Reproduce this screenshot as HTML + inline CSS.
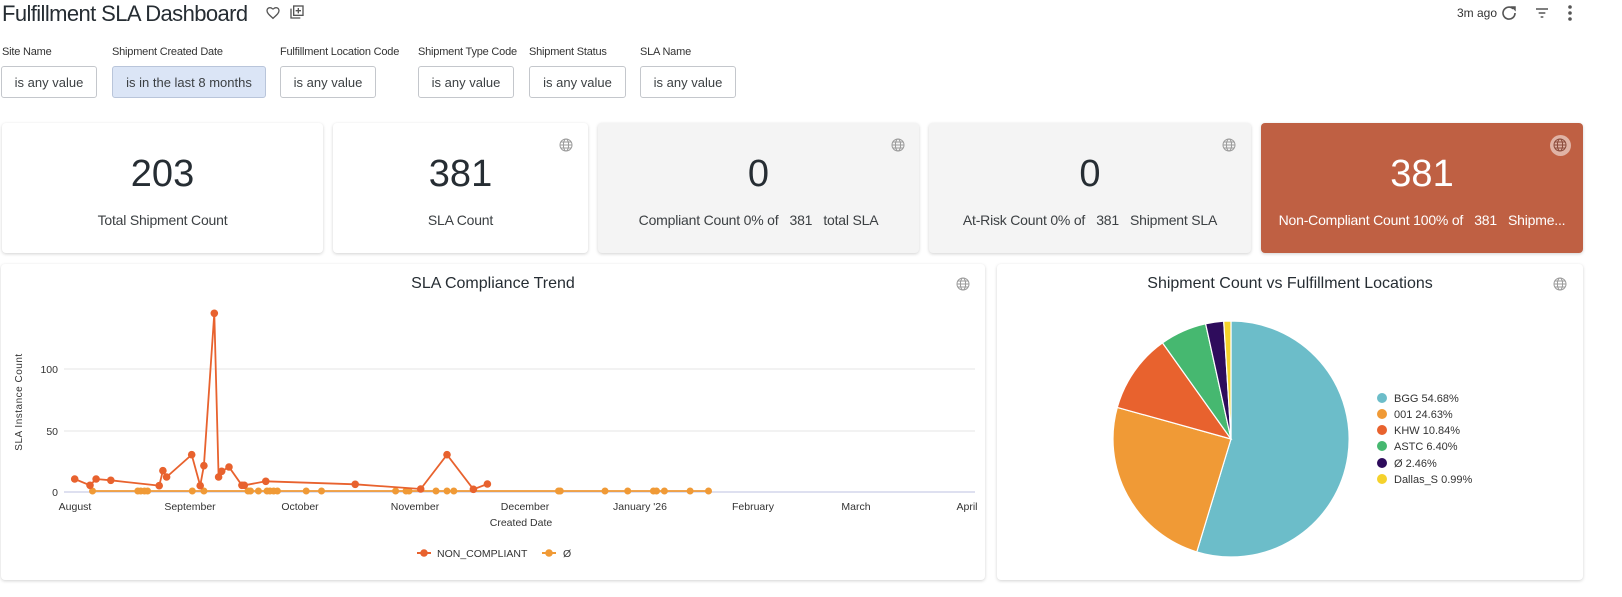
<!DOCTYPE html>
<html><head><meta charset="utf-8"><style>
*{box-sizing:border-box;margin:0;padding:0}
body{width:1622px;height:597px;background:#fff;font-family:"Liberation Sans",Arial,sans-serif;color:#262d33;position:relative;overflow:hidden}
.abs{position:absolute}
.title{left:2px;top:1px;font-size:22px;color:#262d33;letter-spacing:-0.6px}
.lbl{font-size:11px;color:#333;top:46px;letter-spacing:-0.2px}
.box{top:66px;height:32px;border:1px solid #c4c7cc;border-radius:3px;font-size:13px;color:#3c4043;display:flex;align-items:center;justify-content:center;background:#fff}
.card{top:123px;height:130px;border-radius:4px;box-shadow:0 1px 3px rgba(0,0,0,.18);text-align:center}
.card .n{position:absolute;left:0;right:0;top:30px;font-size:38px;color:#262d33}
.card .t{position:absolute;left:0;right:0;top:89px;font-size:14px;color:#3c4043;white-space:nowrap;letter-spacing:-0.2px}
.panel{top:264px;height:316px;border-radius:4px;box-shadow:0 1px 3px rgba(0,0,0,.18);background:#fff}
</style></head><body>
<div class="abs title">Fulfillment SLA Dashboard</div>
<svg class="abs" style="left:265px;top:5px" width="16" height="16" viewBox="0 0 24 24"><path d="M12 20l-1.3-1.2C6 14.5 3 11.8 3 8.5 3 5.9 5 4 7.5 4c1.5 0 2.9.7 3.8 1.8h1.4C13.6 4.7 15 4 16.5 4 19 4 21 5.9 21 8.5c0 3.3-3 6-7.7 10.3z" fill="none" stroke="#555" stroke-width="2"/></svg>
<svg class="abs" style="left:289px;top:4px" width="16" height="16" viewBox="0 0 24 24"><rect x="7" y="3" width="14" height="14" fill="none" stroke="#555" stroke-width="2"/><path d="M3 7v14h14" fill="none" stroke="#555" stroke-width="2"/><path d="M14 6v8M10 10h8" stroke="#555" stroke-width="2"/></svg>
<div class="abs" style="left:1457px;top:6px;font-size:12px;color:#333">3m ago</div>
<svg class="abs" style="left:1500px;top:4px" width="18" height="18" viewBox="0 0 24 24"><path d="M17.6 6.4A8 8 0 1 0 20 12" fill="none" stroke="#555" stroke-width="2.2"/><path d="M14 3h7v7z" fill="#555"/></svg>
<svg class="abs" style="left:1534px;top:5px" width="16" height="16" viewBox="0 0 24 24"><path d="M3 6h18M7 12h10M10 18h4" stroke="#555" stroke-width="2.2"/></svg>
<svg class="abs" style="left:1566px;top:4px" width="8" height="18" viewBox="0 0 8 18"><circle cx="4" cy="3" r="1.8" fill="#555"/><circle cx="4" cy="9" r="1.8" fill="#555"/><circle cx="4" cy="15" r="1.8" fill="#555"/></svg>

<div class="abs lbl" style="left:2px">Site Name</div>
<div class="abs lbl" style="left:112px">Shipment Created Date</div>
<div class="abs lbl" style="left:280px">Fulfillment Location Code</div>
<div class="abs lbl" style="left:418px">Shipment Type Code</div>
<div class="abs lbl" style="left:529px">Shipment Status</div>
<div class="abs lbl" style="left:640px">SLA Name</div>
<div class="abs box" style="left:1px;width:96px">is any value</div>
<div class="abs box" style="left:112px;width:154px;background:#dbe5f6;border-color:#b9c5da">is in the last 8 months</div>
<div class="abs box" style="left:280px;width:96px">is any value</div>
<div class="abs box" style="left:418px;width:96px">is any value</div>
<div class="abs box" style="left:529px;width:97px">is any value</div>
<div class="abs box" style="left:640px;width:96px">is any value</div>

<div class="abs card" style="left:2px;width:321px;background:#fff"><div class="n">203</div><div class="t">Total Shipment Count</div></div>
<div class="abs card" style="left:333px;width:255px;background:#fff"><div class="n">381</div><div class="t">SLA Count</div></div>
<div class="abs card" style="left:598px;width:321px;background:#f4f4f4"><div class="n">0</div><div class="t">Compliant Count 0% of &nbsp; 381 &nbsp; total SLA</div></div>
<div class="abs card" style="left:929px;width:322px;background:#f4f4f4"><div class="n">0</div><div class="t">At-Risk Count 0% of &nbsp; 381 &nbsp; Shipment SLA</div></div>
<div class="abs card" style="left:1261px;width:322px;background:#bf6043"><div class="n" style="color:#fff">381</div><div class="t" style="color:#fff">Non-Compliant Count 100% of &nbsp; 381 &nbsp; Shipme...</div></div>
<div class="abs" style="left:1550px;top:135px;width:21px;height:21px;border-radius:50%;background:#e0b3a5"></div>

<svg class="abs" style="left:0;top:0" width="1622" height="597" pointer-events="none">
<defs><g id="gl"><circle cx="0" cy="0" r="6" fill="none" stroke="#9a9a9a" stroke-width="1"/><ellipse cx="0" cy="0" rx="2.6" ry="6" fill="none" stroke="#9a9a9a" stroke-width="1"/><path d="M-6 0h12M-5 -3h10M-5 3h10" stroke="#9a9a9a" stroke-width="0.9"/></g></defs>
<use href="#gl" x="566" y="145"/><use href="#gl" x="898" y="145"/><use href="#gl" x="1229" y="145"/>
<g transform="translate(1560,145)"><circle r="6" fill="none" stroke="#8a4a3a"/><ellipse rx="2.6" ry="6" fill="none" stroke="#8a4a3a"/><path d="M-6 0h12M-5 -3h10M-5 3h10" stroke="#8a4a3a" stroke-width="0.9"/></g>
</svg>

<div class="abs panel" style="left:1px;width:984px"></div>
<div class="abs panel" style="left:997px;width:586px"></div>
<div class="abs" style="left:1px;width:984px;top:275px;text-align:center;font-size:16px;color:#262d33">SLA Compliance Trend</div>
<div class="abs" style="left:997px;width:586px;top:275px;text-align:center;font-size:16px;color:#262d33">Shipment Count vs Fulfillment Locations</div>

<svg class="abs" style="left:0;top:0" width="1622" height="597">
<use href="#gl" x="963" y="284"/><use href="#gl" x="1560" y="284"/>
<g stroke="#e6e6e6" stroke-width="1"><path d="M64 369H975M64 431H975"/></g>
<path d="M64 492H975" stroke="#c9cde6" stroke-width="1.2"/>
<g font-size="10.5" fill="#333" text-anchor="end"><text x="58" y="373">100</text><text x="58" y="435">50</text><text x="58" y="496">0</text></g>
<text transform="translate(22,402) rotate(-90)" font-size="10" fill="#333" text-anchor="middle" letter-spacing="0.5">SLA Instance Count</text>
<g font-size="10.5" fill="#333" text-anchor="middle">
<text x="75" y="510">August</text><text x="190" y="510">September</text><text x="300" y="510">October</text><text x="415" y="510">November</text><text x="525" y="510">December</text><text x="640" y="510">January '26</text><text x="753" y="510">February</text><text x="856" y="510">March</text><text x="967" y="510">April</text>
<text x="521" y="526">Created Date</text></g>
<path d="M92.5 491H708.5" stroke="#f09a36" stroke-width="1.8"/>
<g fill="#f09a36">
<circle cx="92.5" cy="491" r="3.5"/><circle cx="137.8" cy="491" r="3.5"/><circle cx="140.8" cy="491" r="3.5"/><circle cx="144.5" cy="491" r="3.5"/><circle cx="147.6" cy="491" r="3.5"/><circle cx="192.3" cy="491" r="3.5"/><circle cx="203.9" cy="491" r="3.5"/><circle cx="248" cy="491" r="3.5"/><circle cx="250.5" cy="491" r="3.5"/><circle cx="258.4" cy="491" r="3.5"/><circle cx="267" cy="491" r="3.5"/><circle cx="270" cy="491" r="3.5"/><circle cx="273.7" cy="491" r="3.5"/><circle cx="277.4" cy="491" r="3.5"/><circle cx="306.2" cy="491" r="3.5"/><circle cx="321.5" cy="491" r="3.5"/><circle cx="395.6" cy="491" r="3.5"/><circle cx="406" cy="491" r="3.5"/><circle cx="409" cy="491" r="3.5"/><circle cx="436" cy="491" r="3.5"/><circle cx="447" cy="491" r="3.5"/><circle cx="453.8" cy="491" r="3.5"/><circle cx="558.5" cy="491" r="3.5"/><circle cx="560.3" cy="491" r="3.5"/><circle cx="605" cy="491" r="3.5"/><circle cx="627.7" cy="491" r="3.5"/><circle cx="653.4" cy="491" r="3.5"/><circle cx="656.5" cy="491" r="3.5"/><circle cx="664.4" cy="491" r="3.5"/><circle cx="690.1" cy="491" r="3.5"/><circle cx="708.5" cy="491" r="3.5"/></g>
<polyline fill="none" stroke="#e8622e" stroke-width="1.8" points="74.7,479 90,485.3 96.1,479 110.8,480.3 159.2,485.7 162.9,470.7 166.6,477 191.7,454.7 200.2,485.7 203.9,465.7 214.3,313.3 218.6,477 221.7,471.3 229,467 241.9,485.3 244.3,485.3 265.8,481.3 355.2,484.3 420.7,489 447,454.7 473.4,489.3 487.4,484"/>
<g fill="#e8622e">
<circle cx="74.7" cy="479" r="3.8"/><circle cx="90" cy="485.3" r="3.8"/><circle cx="96.1" cy="479" r="3.8"/><circle cx="110.8" cy="480.3" r="3.8"/><circle cx="159.2" cy="485.7" r="3.8"/><circle cx="162.9" cy="470.7" r="3.8"/><circle cx="166.6" cy="477" r="3.8"/><circle cx="191.7" cy="454.7" r="3.8"/><circle cx="200.2" cy="485.7" r="3.8"/><circle cx="203.9" cy="465.7" r="3.8"/><circle cx="214.3" cy="313.3" r="3.8"/><circle cx="218.6" cy="477" r="3.8"/><circle cx="221.7" cy="471.3" r="3.8"/><circle cx="229" cy="467" r="3.8"/><circle cx="241.9" cy="485.3" r="3.8"/><circle cx="244.3" cy="485.3" r="3.8"/><circle cx="265.8" cy="481.3" r="3.8"/><circle cx="355.2" cy="484.3" r="3.8"/><circle cx="420.7" cy="489" r="3.8"/><circle cx="447" cy="454.7" r="3.8"/><circle cx="473.4" cy="489.3" r="3.8"/><circle cx="487.4" cy="484" r="3.8"/></g>
<path d="M417 553h14" stroke="#e8622e" stroke-width="2"/><circle cx="424" cy="553" r="3.8" fill="#e8622e"/>
<text x="437" y="557" font-size="10.5" fill="#333">NON_COMPLIANT</text>
<path d="M542 553h14" stroke="#f09a36" stroke-width="2"/><circle cx="549" cy="553" r="3.8" fill="#f09a36"/>
<text x="563" y="557" font-size="10.5" fill="#333">Ø</text>

<g transform="translate(1231,439)" stroke="#fff" stroke-width="1.2">
<path d="M0 0L0 -118A118 118 0 1 1 -34.2 112.9Z" fill="#6cbdc9"/>
<path d="M0 0L-34.2 112.9A118 118 0 0 1 -113.7 -31.6Z" fill="#f09a36"/>
<path d="M0 0L-113.7 -31.6A118 118 0 0 1 -68.5 -96.1Z" fill="#e8622e"/>
<path d="M0 0L-68.5 -96.1A118 118 0 0 1 -25.4 -115.2Z" fill="#46b870"/>
<path d="M0 0L-25.4 -115.2A118 118 0 0 1 -7.3 -117.8Z" fill="#2e0c5c"/>
<path d="M0 0L-7.3 -117.8A118 118 0 0 1 0 -118Z" fill="#f5d22c"/>
</g>
<g font-size="11" fill="#333">
<circle cx="1382" cy="398" r="5" fill="#6cbdc9"/><text x="1394" y="402">BGG 54.68%</text>
<circle cx="1382" cy="414" r="5" fill="#f09a36"/><text x="1394" y="418">001 24.63%</text>
<circle cx="1382" cy="430" r="5" fill="#e8622e"/><text x="1394" y="434">KHW 10.84%</text>
<circle cx="1382" cy="446" r="5" fill="#46b870"/><text x="1394" y="450">ASTC 6.40%</text>
<circle cx="1382" cy="463" r="5" fill="#2e0c5c"/><text x="1394" y="467">Ø 2.46%</text>
<circle cx="1382" cy="479" r="5" fill="#f5d22c"/><text x="1394" y="483">Dallas_S 0.99%</text>
</g>
</svg>
</body></html>
